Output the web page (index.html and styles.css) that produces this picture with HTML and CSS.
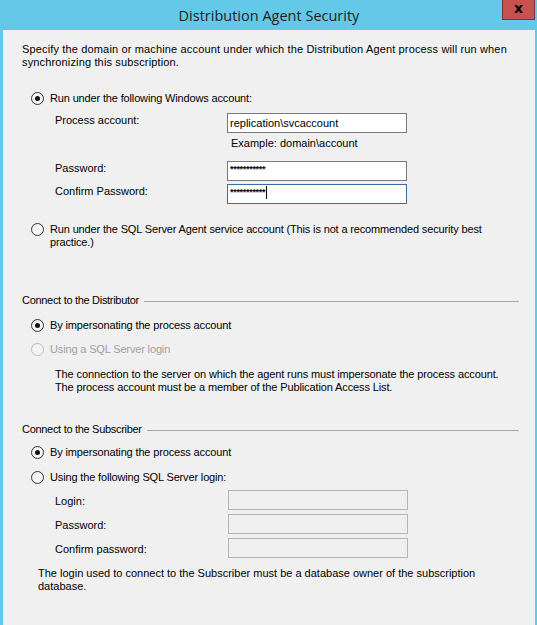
FILE: index.html
```html
<!DOCTYPE html>
<html>
<head>
<meta charset="utf-8">
<link rel="stylesheet" href="styles.css">
</head>
<body>
<div class="window">
  <div class="titlebar">
    <span class="title">Distribution Agent Security</span>
    <div class="close">x</div>
  </div>
  <div class="content">
    <p class="intro">Specify the domain or machine account under which the Distribution Agent process will run when<br>synchronizing this subscription.</p>

    <div class="radio-row r-win"><span class="radio checked"></span><span class="rlabel">Run under the following Windows account:</span></div>

    <div class="form form-win">
      <div class="label">Process account:</div>
      <div class="field">replication\svcaccount</div>
      <div class="example">Example: domain\account</div>
      <div class="label row2">Password:</div>
      <div class="field pw row2">***********</div>
      <div class="label row3">Confirm Password:</div>
      <div class="field pw focus row3">***********<span class="caret"></span></div>
    </div>

    <div class="radio-row r-sql"><span class="radio"></span><span class="rlabel">Run under the SQL Server Agent service account (This is not a recommended security best<br>practice.)</span></div>

    <div class="section-head h-dist"><span>Connect to the Distributor</span><span class="rule"></span></div>
    <div class="radio-row r-d1"><span class="radio checked"></span><span class="rlabel">By impersonating the process account</span></div>
    <div class="radio-row r-d2 disabled"><span class="radio"></span><span class="rlabel">Using a SQL Server login</span></div>
    <p class="note n-dist">The connection to the server on which the agent runs must impersonate the process account.<br>The process account must be a member of the Publication Access List.</p>

    <div class="section-head h-sub"><span>Connect to the Subscriber</span><span class="rule"></span></div>
    <div class="radio-row r-s1"><span class="radio checked"></span><span class="rlabel">By impersonating the process account</span></div>
    <div class="radio-row r-s2"><span class="radio"></span><span class="rlabel">Using the following SQL Server login:</span></div>

    <div class="form form-sub">
      <div class="label">Login:</div>
      <div class="field off"></div>
      <div class="label">Password:</div>
      <div class="field off"></div>
      <div class="label">Confirm password:</div>
      <div class="field off"></div>
    </div>

    <p class="note n-sub">The login used to connect to the Subscriber must be a database owner of the subscription<br>database.</p>
  </div>
</div>
</body>
</html>
```

FILE: styles.css
```css
* { box-sizing: border-box; }
html, body { margin: 0; padding: 0; }
body {
  width: 537px;
  height: 625px;
  overflow: hidden;
  background: #64c8e8;
  font-family: "Liberation Sans", Arial, sans-serif;
  font-size: 11px;
  color: #000;
}
.window {
  padding: 0 2px 0 3px;
  height: 625px;
  display: flex;
  flex-direction: column;
}
.titlebar {
  position: relative;
  height: 29px;
  display: flex;
  justify-content: center;
  align-items: center;
  flex: none;
}
.title {
  font-family: "Open Sans", "Noto Sans", sans-serif;
  font-size: 14.5px;
  color: #1e1e1e;
  padding-top: 1px;
}
.close {
  position: absolute;
  top: 0;
  right: 0;
  width: 33px;
  height: 20px;
  background: #c75050;
  border: 1px solid #7c3434;
  border-top: none;
  color: #000;
  font-family: "DejaVu Sans", sans-serif;
  font-weight: bold;
  font-size: 14px;
  line-height: 17px;
  text-align: center;
}
.content {
  flex: 1;
  background: #f0f0f0;
  border-top: 1px solid #8fb8cc;
  padding: 13px 16px 0 19px;
  line-height: 13px;
  white-space: nowrap;
}
p { margin: 0; }
.intro { letter-spacing: 0.15px; }
.radio-row {
  display: flex;
  align-items: flex-start;
  margin-left: 9px;
}
.rlabel { letter-spacing: -0.15px; }
.radio {
  width: 13px;
  height: 13px;
  border-radius: 50%;
  border: 1px solid #333;
  background: radial-gradient(circle, #fff 0%, #f4f4f4 60%, #e2e2e2 100%);
  flex: none;
  position: relative;
  margin-right: 6px;
}
.radio.checked::after {
  content: "";
  position: absolute;
  left: 3px;
  top: 3px;
  width: 5px;
  height: 5px;
  border-radius: 50%;
  background: #111;
}
.disabled .radio { border-color: #bcbcbc; background: #f4f4f4; }
.disabled .rlabel { color: #a0a0a0; }
.r-win { margin-top: 23px; }
.form {
  display: grid;
  grid-template-columns: 172px 180px;
  margin-left: 33px;
}
.form-win { margin-top: 8px; }
.label { padding-top: 1px; }
.field {
  height: 20px;
  background: #fff;
  border: 1px solid #7a7a7a;
  padding: 2px 2px 0 2px;
  line-height: 14px;
}
.field.pw { font-size: 9px; letter-spacing: -0.3px; line-height: 12px; padding-top: 1px; font-weight: bold; }
.field.focus { border-color: #3d6d9a; }
.caret {
  display: inline-block;
  width: 1px;
  height: 13px;
  background: #000;
  vertical-align: -4px;
  margin-left: 1px;
}
.example { grid-column: 2; padding-left: 4px; margin-top: 4px; margin-bottom: 11px; }
.form-win .row3 { margin-top: 3px; }
.r-sql { margin-top: 19px; }
.section-head {
  display: flex;
  align-items: center;
  letter-spacing: -0.3px;
}
.section-head .rule {
  flex: 1;
  height: 1px;
  background: #a8a8a8;
  margin-left: 5px;
  margin-top: 1px;
}
.h-dist { margin-top: 45px; }
.r-d1 { margin-top: 12px; }
.r-d2 { margin-top: 11px; }
.n-dist { margin-top: 12px; margin-left: 33px; letter-spacing: -0.12px; }
.h-sub { margin-top: 29px; }
.r-s1 { margin-top: 10px; }
.r-s2 { margin-top: 12px; }
.form-sub {
  margin-top: 6px;
  grid-template-columns: 173px 180px;
  row-gap: 4px;
}
.form-sub .label { padding-top: 5px; }
.field.off { background: #f0f0f0; border-color: #b4b4b4; }
.n-sub { margin-top: 9px; margin-left: 16px; }
```
